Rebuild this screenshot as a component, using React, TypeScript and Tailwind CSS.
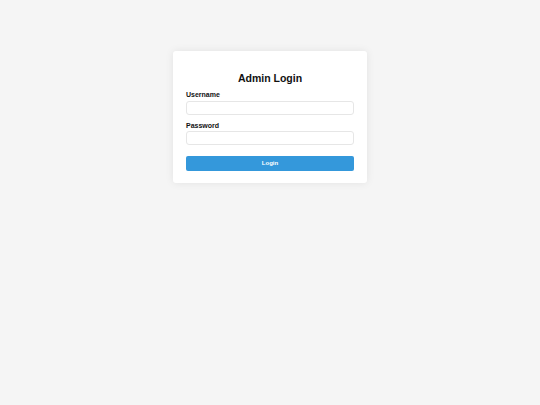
import React, { useState } from 'react';

const App: React.FC = () => {
  const [username, setUsername] = useState('');
  const [password, setPassword] = useState('');

  return (
    <div
      className="min-h-screen w-full bg-[#f5f5f5] flex justify-center pt-[51px]"
      style={{ fontFamily: '"Liberation Sans", Arial, sans-serif' }}
    >
      <div className="w-[194px] h-[132px] bg-white rounded-[3px] shadow-[0_0_8px_rgba(0,0,0,0.08)] px-[13px] pt-[21px]">
        <h2 className="text-[10.5px] leading-[13px] font-bold text-center text-[#111]">Admin Login</h2>
        <form onSubmit={(e) => e.preventDefault()} className="mt-[6px]">
          <label className="block text-[7px] leading-[8px] font-bold text-[#111]">Username</label>
          <input
            type="text"
            value={username}
            onChange={(e) => setUsername(e.target.value)}
            className="block w-full h-[14px] mt-[2px] border border-[#e6e6e6] rounded-[3px] bg-white outline-none"
          />
          <label className="block text-[7px] leading-[8px] font-bold text-[#111] mt-[7px]">Password</label>
          <input
            type="password"
            value={password}
            onChange={(e) => setPassword(e.target.value)}
            className="block w-full h-[14px] mt-[1px] border border-[#e6e6e6] rounded-[3px] bg-white outline-none"
          />
          <button
            type="submit"
            className="block w-full h-[15px] mt-[11px] bg-[#3498db] rounded-[2px] text-white text-[6px] font-bold leading-[15px]"
          >
            Login
          </button>
        </form>
      </div>
    </div>
  );
};

export default App;
